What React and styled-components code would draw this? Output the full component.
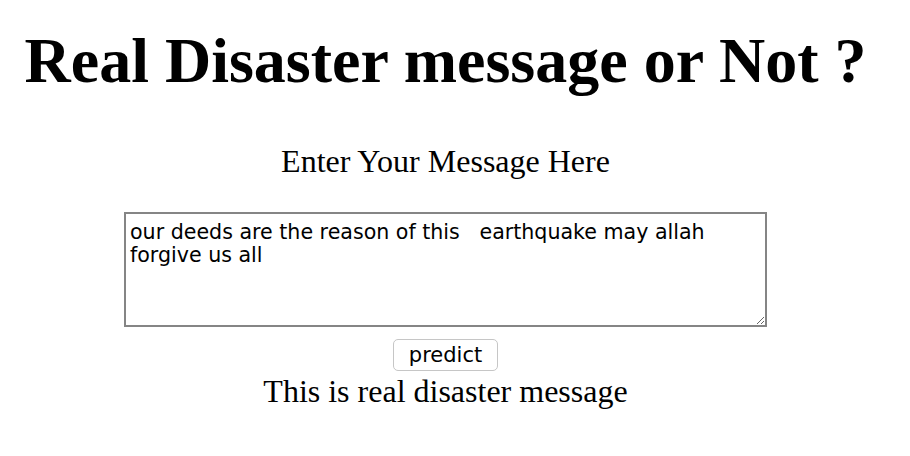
import React, { useState } from 'react';
import styled, { createGlobalStyle } from 'styled-components';

const GlobalStyle = createGlobalStyle`
  html, body {
    margin: 0;
    padding: 0;
    background: #ffffff;
  }
  body {
    font-family: 'Liberation Serif', 'Times New Roman', serif;
    color: #000;
  }
`;

export default function App() {
  const [message, setMessage] = useState(
    'our deeds are the reason of this   earthquake may allah forgive us all'
  );

  return (
    <Page>
      <GlobalStyle />
      <Title>Real Disaster message or Not ?</Title>
      <Form onSubmit={(e) => e.preventDefault()}>
        <Label htmlFor="msg">Enter Your Message Here</Label>
        <MessageBox
          id="msg"
          spellCheck={false}
          value={message}
          onChange={(e) => setMessage(e.target.value)}
        />
        <PredictButton type="submit">predict</PredictButton>
      </Form>
      <Result>This is real disaster message</Result>
    </Page>
  );
}

// page is a bit narrower than the window (scrollbar gutter in the original)
const Page = styled.div`
  width: 891px;
  display: flex;
  flex-direction: column;
  align-items: center;
  padding-top: 24px;
`;

const Title = styled.h1`
  margin: 0;
  font-size: 64px;
  font-weight: bold;
  line-height: 74px;
  white-space: nowrap;
`;

const Form = styled.form`
  display: flex;
  flex-direction: column;
  align-items: center;
  margin-top: 45px;
`;

const Label = styled.label`
  font-size: 32px;
  line-height: 36px;
`;

const MessageBox = styled.textarea`
  box-sizing: border-box;
  width: 643px;
  height: 115px;
  margin: 33px 0 0;
  padding: 7px 4px;
  border: 2px solid #858585;
  font-family: 'DejaVu Sans', 'Liberation Sans', sans-serif;
  font-size: 20.6px;
  line-height: 23px;
  color: #000;
  resize: both;
  outline: none;
`;

const PredictButton = styled.button`
  box-sizing: border-box;
  margin-top: 12px;
  width: 105px;
  height: 32px;
  padding: 0;
  background: #fff;
  border: 1px solid #c6c6c6;
  border-radius: 5px;
  font-family: 'DejaVu Sans', 'Liberation Sans', sans-serif;
  font-size: 21px;
  color: #000;
  cursor: pointer;
`;

const Result = styled.div`
  margin-top: 2px;
  font-size: 32px;
  line-height: 36px;
`;
